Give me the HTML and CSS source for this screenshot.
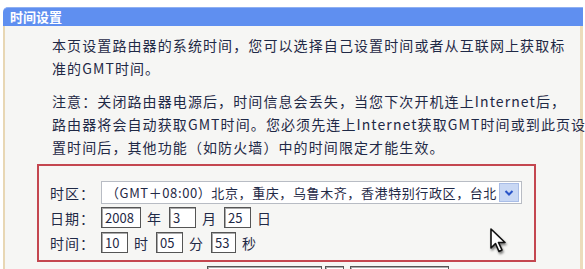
FILE: index.html
```html
<!doctype html>
<html lang="zh-CN">
<head>
<meta charset="utf-8">
<title>时间设置</title>
<link rel="stylesheet" href="styles.css">
</head>
<body>

	<div class="panel">

		<div class="panelTitle">时间设置</div>

		<div class="panelBody">

			<p class="note">本页设置路由器的系统时间，您可以选择自己设置时间或者从互联网上获取标<br>准的GMT时间。</p>

			<p class="note">注意：关闭路由器电源后，时间信息会丢失，当您下次开机连上Internet后，<br>路由器将会自动获取GMT时间。您必须先连上Internet获取GMT时间或到此页设<br>置时间后，其他功能（如防火墙）中的时间限定才能生效。</p>

			<div class="timeBox">

				<div class="row">
					<span class="label">时区：</span>
					<div class="select">
						<span class="selectText">（GMT＋08:00）北京，重庆，乌鲁木齐，香港特别行政区，台北</span>
						<span class="selectBtn">
							<svg width="10" height="8" viewBox="0 0 10 8"><path d="M1.5 2 L5 5.5 L8.5 2" fill="none" stroke="#2a55c8" stroke-width="2"/></svg>
						</span>
					</div>
				</div>

				<div class="row">
					<span class="label">日期：</span>
					<span class="box w40">2008</span><span class="unit">年</span>
					<span class="box w28">3</span><span class="unit">月</span>
					<span class="box w26">25</span><span class="unit">日</span>
				</div>

				<div class="row">
					<span class="label">时间：</span>
					<span class="box w26">10</span><span class="unit">时</span>
					<span class="box w26">05</span><span class="unit">分</span>
					<span class="box w24">53</span><span class="unit">秒</span>
				</div>

				<!-- mouse pointer caught in the screenshot -->
				<svg class="cursor" width="20" height="28" viewBox="0 0 20 28">
					<path d="M2 2 L2 21 L6.5 16.5 L10 24.5 L13 23 L9.5 15.5 L16 15.5 Z" fill="#fff" stroke="#111" stroke-width="1.6" stroke-linejoin="round"/>
				</svg>

			</div>

			<div class="row nextRow">
				<span class="label">缺省网关：</span>
				<span class="box ipBox">0.0.0.0</span>
				<span class="box gapBox"></span>
				<span class="box ipBox2">0.0.0.0</span>
			</div>

		</div>

	</div>

</body>
</html>
```

FILE: styles.css
```css
body { background-color: #fff; color: #1f2946; font: 14px "Noto Sans CJK SC", "Noto Sans", sans-serif; height: 269px; margin: 0; overflow: hidden; }

.panel { margin: 7px 2px 0 3px; }

.panelTitle { background-color: #5f8ff0; border-top: 1px solid #8fb0f2; border-radius: 5px 0 0 0; color: #fff; font-size: 13px; font-weight: bold; height: 18px; line-height: 18px; padding-left: 7px; }

.panelBody { background-color: #f6f6f4; border-left: 2px solid #e8d7b4; border-right: 3px solid #ecdcbc; height: 260px; padding: 8px 0 0 47px; }

.note { letter-spacing: 1.1px; line-height: 23px; margin: 0 0 10px 0; white-space: nowrap; }

.timeBox { border: 2px solid #c4464f; height: 80px; margin: -5px 0 0 -15px; padding: 14px 0 0 11px; position: relative; width: 484px; }

.row { align-items: center; display: flex; height: 25px; white-space: nowrap; }
.label { letter-spacing: 1px; width: 51px; }

.select { align-items: center; background-color: #fff; border: 1px solid #b8bcc4; display: flex; height: 21px; width: 419px; }
.selectText { flex: 1; font-size: 13px; letter-spacing: 0.6px; padding-left: 4px; }
.selectBtn { align-items: center; background-color: #c9d8f4; border: 1px solid #a9bde6; display: flex; height: 17px; justify-content: center; margin-right: 2px; width: 18px; }

.box { background-color: #fff; border: 1px solid #555; box-shadow: inset 1px 1px 0 #aaa; font-size: 13px; height: 19px; line-height: 19px; padding-left: 3px; }
.w40 { width: 35px; }
.w28 { width: 22px; }
.w26 { width: 22px; }
.w24 { width: 20px; }
.unit { padding: 0 8px 0 6px; }

.cursor { filter: drop-shadow(1px 2px 1px rgba(0,0,0,0.5)); left: 450px; position: absolute; top: 61px; }

.nextRow { margin-top: 2px; }
.ipBox { margin-left: 104px; width: 110px; }
.gapBox { margin-left: 3px; width: 14px; }
.ipBox2 { margin-left: 6px; width: 94px; }
```
